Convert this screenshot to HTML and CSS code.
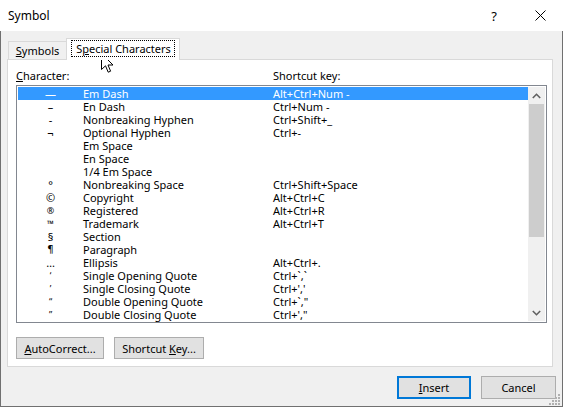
FILE: index.html
```html
<!DOCTYPE html>
<html>
<head>
<meta charset="utf-8">
<link rel="stylesheet" href="styles.css">
</head>
<body>
<div class="window">
  <div class="titlebar">
    <span class="title">Symbol</span>
    <span class="tb-btn help">?</span>
    <span class="tb-btn close"><svg width="11" height="11" viewBox="0 0 11 11"><path d="M0.5 0.5L10.5 10.5M10.5 0.5L0.5 10.5" stroke="#000" stroke-width="1" fill="none"/></svg></span>
  </div>
  <div class="body">
    <div class="tabs">
      <div class="tab"><span><u>S</u>ymbols</span></div>
      <div class="tab active"><span class="focus">S<u>p</u>ecial Characters</span></div>
    </div>
    <div class="panel">
      <div class="labels"><span class="lbl-char"><u>C</u>haracter:</span><span>Shortcut key:</span></div>
      <div class="list">
        <div class="rows">
          <div class="row sel"><span class="sym">—</span><span class="name">Em Dash</span><span class="key">Alt+Ctrl+Num -</span></div>
          <div class="row"><span class="sym">–</span><span class="name">En Dash</span><span class="key">Ctrl+Num -</span></div>
          <div class="row"><span class="sym">-</span><span class="name">Nonbreaking Hyphen</span><span class="key">Ctrl+Shift+_</span></div>
          <div class="row"><span class="sym">¬</span><span class="name">Optional Hyphen</span><span class="key">Ctrl+-</span></div>
          <div class="row"><span class="sym"></span><span class="name">Em Space</span><span class="key"></span></div>
          <div class="row"><span class="sym"></span><span class="name">En Space</span><span class="key"></span></div>
          <div class="row"><span class="sym"></span><span class="name">1/4 Em Space</span><span class="key"></span></div>
          <div class="row"><span class="sym">°</span><span class="name">Nonbreaking Space</span><span class="key">Ctrl+Shift+Space</span></div>
          <div class="row"><span class="sym">©</span><span class="name">Copyright</span><span class="key">Alt+Ctrl+C</span></div>
          <div class="row"><span class="sym small">®</span><span class="name">Registered</span><span class="key">Alt+Ctrl+R</span></div>
          <div class="row"><span class="sym small">™</span><span class="name">Trademark</span><span class="key">Alt+Ctrl+T</span></div>
          <div class="row"><span class="sym">§</span><span class="name">Section</span><span class="key"></span></div>
          <div class="row"><span class="sym pilcrow">¶</span><span class="name">Paragraph</span><span class="key"></span></div>
          <div class="row"><span class="sym">…</span><span class="name">Ellipsis</span><span class="key">Alt+Ctrl+.</span></div>
          <div class="row"><span class="sym small">‘</span><span class="name">Single Opening Quote</span><span class="key">Ctrl+`,`</span></div>
          <div class="row"><span class="sym small">’</span><span class="name">Single Closing Quote</span><span class="key">Ctrl+','</span></div>
          <div class="row"><span class="sym small">“</span><span class="name">Double Opening Quote</span><span class="key">Ctrl+`,"</span></div>
          <div class="row"><span class="sym small">”</span><span class="name">Double Closing Quote</span><span class="key">Ctrl+',"</span></div>
        </div>
        <div class="scrollbar">
          <div class="arrow"><svg width="9" height="6" viewBox="0 0 9 6"><path d="M0.8 5L4.5 1.3L8.2 5" stroke="#606060" stroke-width="1.6" fill="none"/></svg></div>
          <div class="track"><div class="thumb"></div></div>
          <div class="arrow"><svg width="9" height="6" viewBox="0 0 9 6"><path d="M0.8 1L4.5 4.7L8.2 1" stroke="#606060" stroke-width="1.6" fill="none"/></svg></div>
        </div>
      </div>
      <div class="panel-buttons">
        <button class="btn btn-auto"><u>A</u>utoCorrect...</button>
        <button class="btn btn-key">Shortcut <u>K</u>ey...</button>
      </div>
    </div>
    <div class="dialog-buttons">
      <button class="btn btn-insert"><u>I</u>nsert</button>
      <button class="btn btn-cancel">Cancel</button>
    </div>
  </div>
  <svg class="grip" width="12" height="12" viewBox="0 0 12 12">
    <g fill="#b0b0b0">
      <rect x="9" y="1" width="2" height="2"/>
      <rect x="6" y="4" width="2" height="2"/><rect x="9" y="4" width="2" height="2"/>
      <rect x="3" y="7" width="2" height="2"/><rect x="6" y="7" width="2" height="2"/><rect x="9" y="7" width="2" height="2"/>
      <rect x="0" y="10" width="2" height="2"/><rect x="3" y="10" width="2" height="2"/><rect x="6" y="10" width="2" height="2"/><rect x="9" y="10" width="2" height="2"/>
    </g>
  </svg>
  <svg class="cursor" width="13" height="21" viewBox="0 0 13 21">
    <path d="M0.5 0.5L0.5 16.5L4.5 12.8L7.2 19.2L9.6 18.2L7 12L12 12Z" fill="#fff" stroke="#000" stroke-width="1" stroke-linejoin="miter"/>
  </svg>
</div>
</body>
</html>
```

FILE: styles.css
```css
* {
  box-sizing: border-box;
}

body {
  margin: 0;
  font-family: "Noto Sans", sans-serif;
  font-size: 11px;
  color: #000;
}

.window {
  width: 563px;
  height: 407px;
  display: flex;
  flex-direction: column;
  position: relative;
  overflow: hidden;
  background: #f0f0f0;
}

.titlebar {
  height: 31px;
  flex: none;
  background: #fff;
  display: flex;
  align-items: center;
}

.title {
  flex: 1;
  padding-left: 8px;
  font-size: 12px;
}

.tb-btn {
  width: 46px;
  height: 31px;
  display: flex;
  align-items: center;
  justify-content: center;
}

.help {
  font-size: 13px;
}

.body {
  flex: 1;
  border: 1px solid #707070;
  border-top: none;
  padding: 0 6px;
}

.tabs {
  display: flex;
  align-items: flex-end;
  height: 21px;
  margin-top: 7px;
  padding-left: 1px;
}

.tab {
  height: 18px;
  width: 58px;
  border: 1px solid #d9d9d9;
  border-bottom: none;
  border-right: none;
  background: #f0f0f0;
  display: flex;
  align-items: center;
  justify-content: center;
  line-height: 13px;
}

.tab.active {
  height: 22px;
  width: 114px;
  margin-bottom: -1px;
  background: #fff;
  border-right: 1px solid #d9d9d9;
  position: relative;
  z-index: 1;
  padding-bottom: 2px;
}

.focus {
  outline: 1px dotted #000;
  outline-offset: 0;
  padding: 1px 3px 1px 4px;
  line-height: 13px;
}

.panel {
  width: 546px;
  height: 308px;
  border: 1px solid #d9d9d9;
  background: #fff;
  padding: 9px 0 0 8px;
}

.labels {
  display: flex;
  height: 13px;
  line-height: 13px;
}

.lbl-char {
  width: 257px;
}

.list {
  margin-top: 3px;
  width: 531px;
  height: 238px;
  border: 1px solid #828790;
  padding: 1px;
  display: flex;
}

.rows {
  flex: 1;
}

.row {
  display: flex;
  height: 13px;
  line-height: 13px;
  white-space: nowrap;
}

.row.sel {
  background: #3399ff;
  color: #fff;
}

.sym {
  width: 65px;
  text-align: center;
}

.sym.small {
  font-size: 9px;
}

.sym.pilcrow {
  font-family: "DejaVu Sans", sans-serif;
  font-size: 10px;
}

.name {
  width: 190px;
}

.scrollbar {
  width: 17px;
  background: #f0f0f0;
  display: flex;
  flex-direction: column;
}

.arrow {
  height: 17px;
  flex: none;
  display: flex;
  align-items: center;
  justify-content: center;
}

.track {
  flex: 1;
}

.thumb {
  margin: 0 1px;
  height: 133px;
  background: #cdcdcd;
}

.panel-buttons {
  margin-top: 14px;
  display: flex;
  gap: 10px;
}

.btn {
  font: inherit;
  color: #000;
  background: #e1e1e1;
  border: 1px solid #adadad;
  height: 22px;
  padding: 0;
  line-height: 13px;
}

.btn-auto {
  width: 88px;
}

.btn-key {
  width: 90px;
}

.dialog-buttons {
  display: flex;
  justify-content: flex-end;
  gap: 10px;
  margin-top: 9px;
}

.dialog-buttons .btn {
  height: 23px;
}

.btn-insert {
  width: 74px;
  border: 2px solid #0078d7;
}

.btn-cancel {
  width: 75px;
}

.grip {
  position: absolute;
  right: 2px;
  bottom: 2px;
}

.cursor {
  position: absolute;
  left: 101px;
  top: 53px;
}
```
